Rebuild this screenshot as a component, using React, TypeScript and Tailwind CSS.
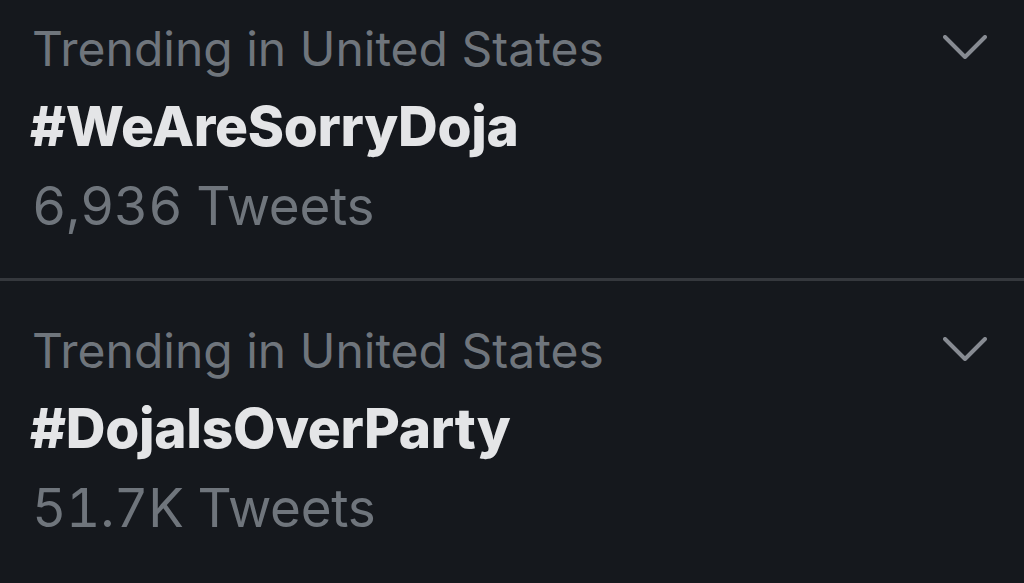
type Trend = {
  tag: string;
  count: string;
};

const trends: Trend[] = [
  { tag: "#WeAreSorryDoja", count: "6,936 Tweets" },
  { tag: "#DojaIsOverParty", count: "51.7K Tweets" },
];

const Chevron = () => (
  <svg width="44" height="24" viewBox="0 0 44 24" className="mt-[15px] shrink-0">
    <polyline
      points="2,2 22,22 42,2"
      fill="none"
      stroke="#878b92"
      strokeWidth="4"
      strokeLinecap="round"
      strokeLinejoin="round"
    />
  </svg>
);

const TrendRow = ({ trend, first }: { trend: Trend; first?: boolean }) => {
  return (
    <div
      className={`flex justify-between items-start pl-[30px] pr-[37px] ${
        first ? "pt-[20px] pb-[40px] border-b-[3px] border-[#35383d]" : "pt-[41px]"
      }`}
    >
      <div className="flex flex-col">
        <span className="pl-[2px] text-[48px] leading-[58px] text-[#6f757c]">
          Trending in United States
        </span>
        <span className="mt-[15px] text-[55px] leading-[66px] font-extrabold text-[#e4e5e7] tracking-[-0.3px]">
          {trend.tag}
        </span>
        <span className="mt-[15px] pl-[2px] text-[53px] leading-[64px] text-[#6f757c] tabular-nums tracking-[-0.3px]">
          {trend.count}
        </span>
      </div>
      <Chevron />
    </div>
  );
};

export default function App() {
  return (
    <div
      className="h-[583px] w-[1024px] overflow-hidden bg-[#15181d]"
      style={{ fontFamily: "Inter, 'Liberation Sans', sans-serif" }}
    >
      {trends.map((t, i) => (
        <TrendRow key={t.tag} trend={t} first={i === 0} />
      ))}
    </div>
  );
}
